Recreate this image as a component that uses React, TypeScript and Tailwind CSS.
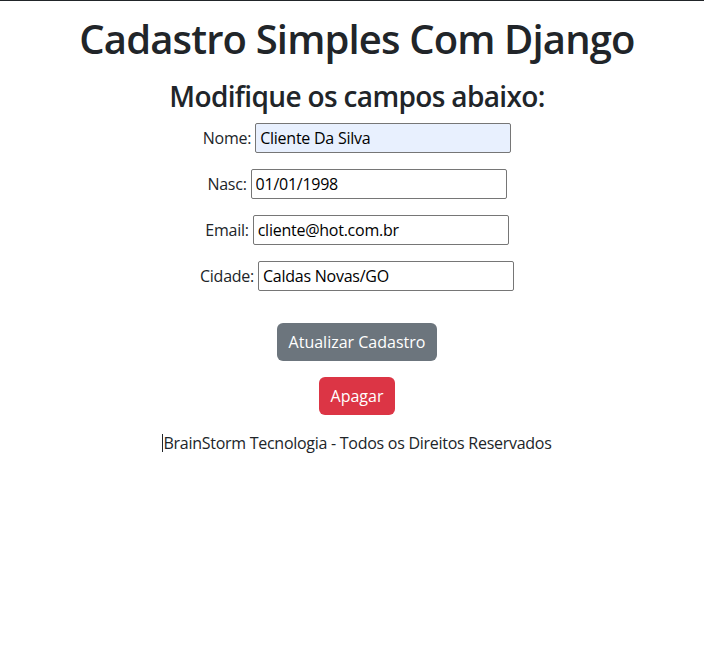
const campos = [
  { label: "Nome:", value: "Cliente Da Silva", filled: true },
  { label: "Nasc:", value: "01/01/1998" },
  { label: "Email:", value: "cliente@hot.com.br" },
  { label: "Cidade:", value: "Caldas Novas/GO" },
];

export default function App() {
  return (
    <div className="min-h-screen border-t border-[#212529] bg-white font-['Open_Sans',sans-serif] text-[#212529]">
      <div className="flex flex-col items-center pl-[10px]">
        <h1 className="mt-[14px] text-[40px] leading-[48px] font-semibold tracking-[-0.85px]">
          Cadastro Simples Com Django
        </h1>
        <h2 className="mt-[16px] text-[28px] leading-[34px] font-semibold tracking-[-0.65px]">
          Modifique os campos abaixo:
        </h2>
        <form className="mt-[10px] flex flex-col items-center">
          {campos.map((c) => (
            <p key={c.label} className="mb-4 flex items-center gap-[4px] text-base tracking-[-0.25px]">
              <label>{c.label}</label>
              <input
                defaultValue={c.value}
                className={
                  "h-[30px] w-[256px] rounded-[2px] border border-[#767676] px-[4px] text-base text-black " +
                  (c.filled ? "bg-[#e8f0fe]" : "bg-white")
                }
              />
            </p>
          ))}
          <button
            type="button"
            className="mt-[16px] h-[38px] rounded-[6px] bg-[#6c757d] px-3 text-base text-white"
          >
            Atualizar Cadastro
          </button>
          <button
            type="button"
            className="mt-[16px] h-[38px] rounded-[6px] bg-[#dc3545] px-3 text-base text-white"
          >
            Apagar
          </button>
        </form>
        <p className="mt-[16px] flex items-center text-base tracking-[-0.27px]">
          <span className="h-[18px] w-px bg-[#212529]" />
          BrainStorm Tecnologia - Todos os Direitos Reservados
        </p>
      </div>
    </div>
  );
}
